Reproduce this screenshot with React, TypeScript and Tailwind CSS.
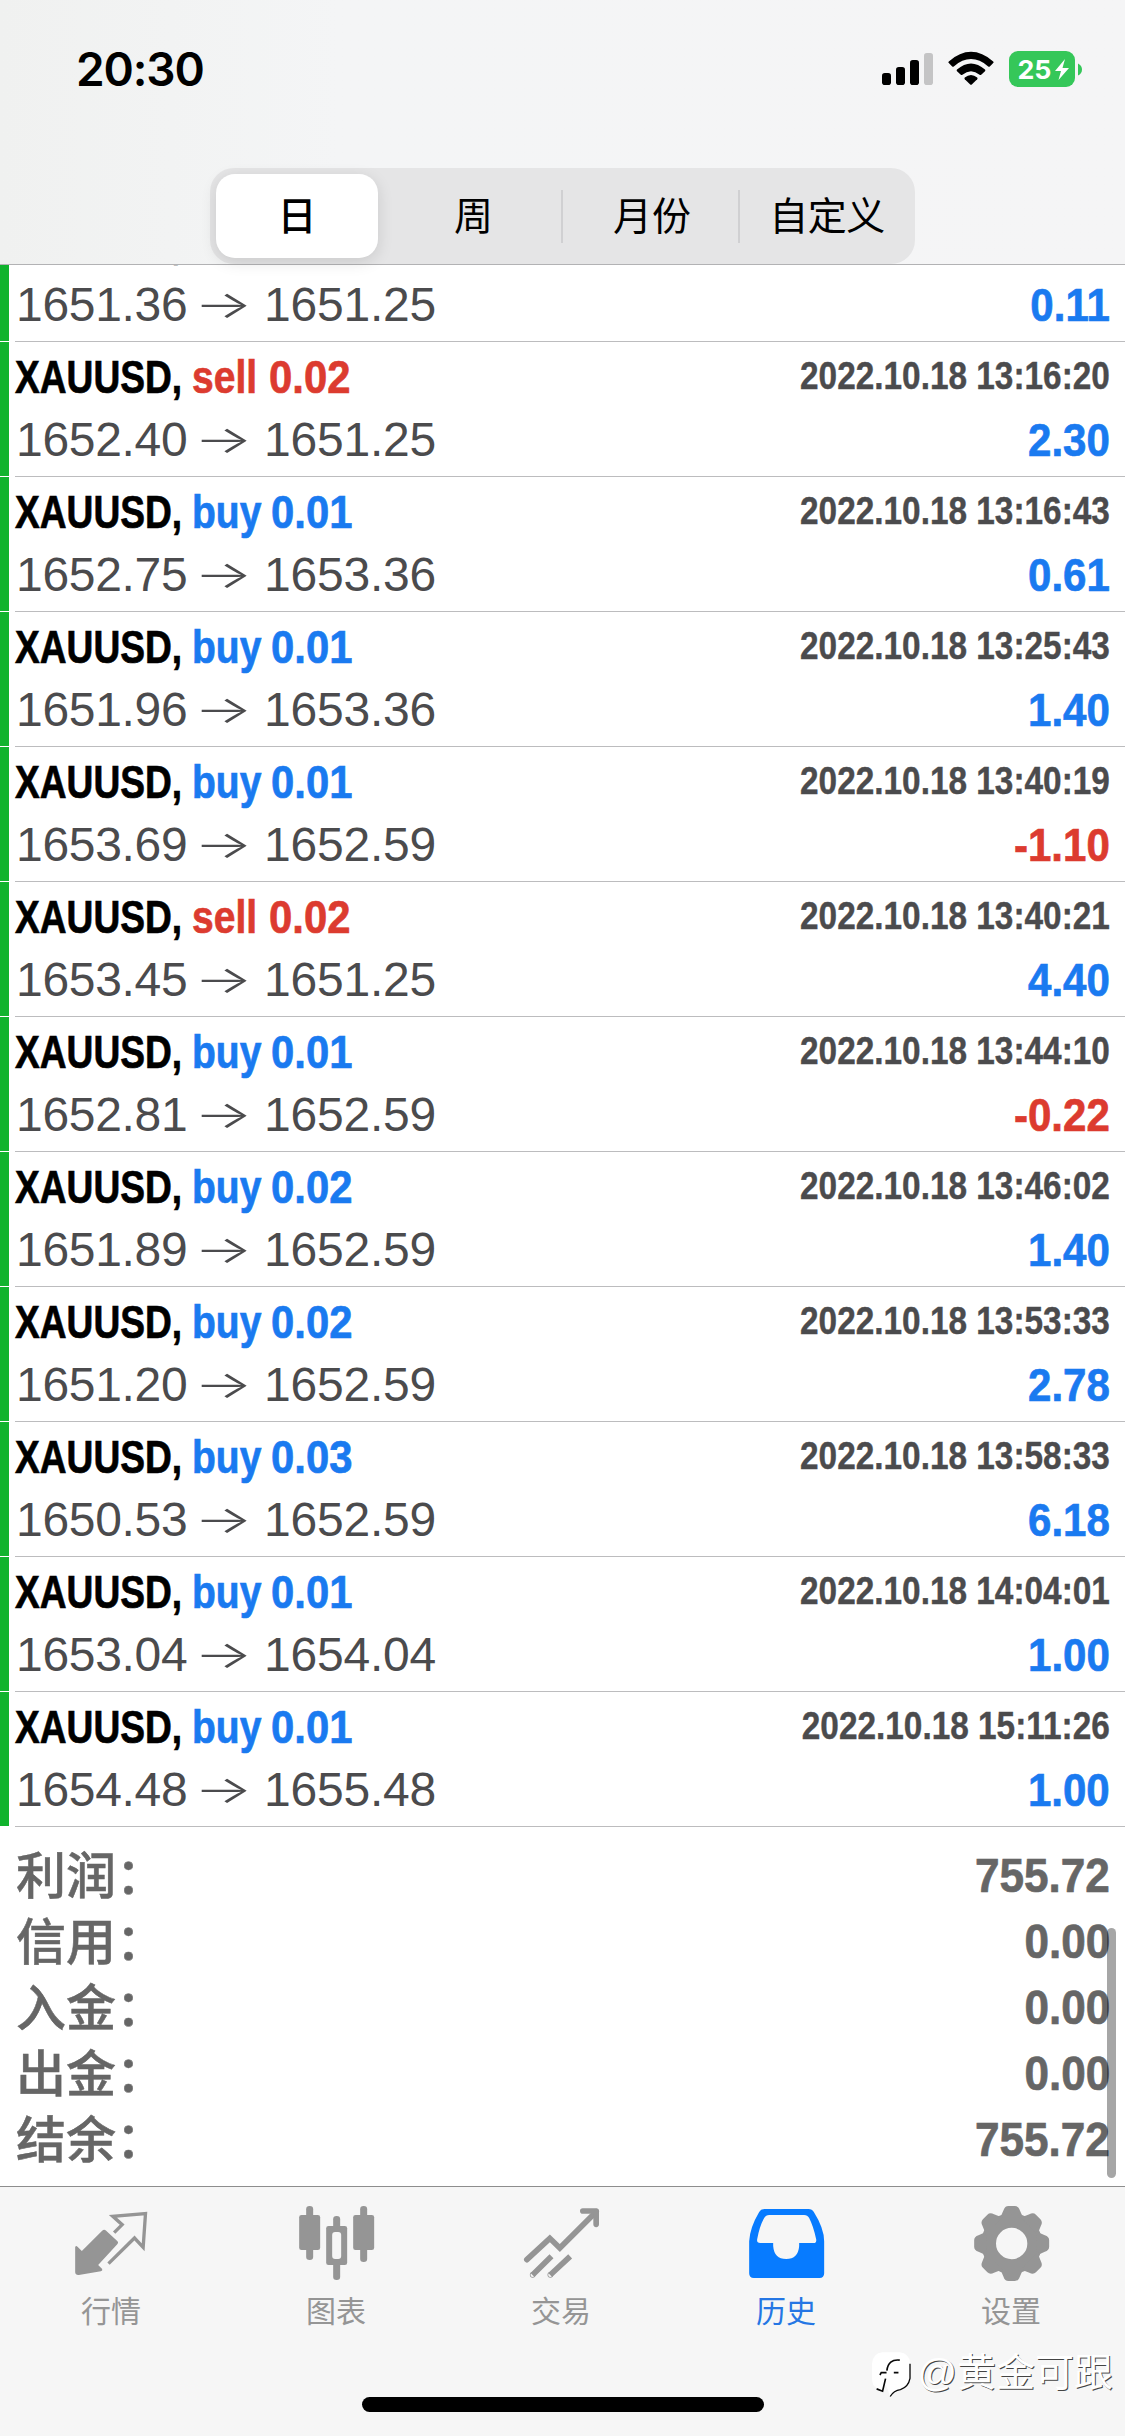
import React from "react";

type Deal = { side: "buy" | "sell"; volume: string; open: string; close: string; time: string; profit: string };

const deals: Deal[] = [
  { side: "sell", volume: "", open: "1651.36", close: "1651.25", time: "", profit: "0.11" },
  { side: "sell", volume: "0.02", open: "1652.40", close: "1651.25", time: "2022.10.18 13:16:20", profit: "2.30" },
  { side: "buy", volume: "0.01", open: "1652.75", close: "1653.36", time: "2022.10.18 13:16:43", profit: "0.61" },
  { side: "buy", volume: "0.01", open: "1651.96", close: "1653.36", time: "2022.10.18 13:25:43", profit: "1.40" },
  { side: "buy", volume: "0.01", open: "1653.69", close: "1652.59", time: "2022.10.18 13:40:19", profit: "-1.10" },
  { side: "sell", volume: "0.02", open: "1653.45", close: "1651.25", time: "2022.10.18 13:40:21", profit: "4.40" },
  { side: "buy", volume: "0.01", open: "1652.81", close: "1652.59", time: "2022.10.18 13:44:10", profit: "-0.22" },
  { side: "buy", volume: "0.02", open: "1651.89", close: "1652.59", time: "2022.10.18 13:46:02", profit: "1.40" },
  { side: "buy", volume: "0.02", open: "1651.20", close: "1652.59", time: "2022.10.18 13:53:33", profit: "2.78" },
  { side: "buy", volume: "0.03", open: "1650.53", close: "1652.59", time: "2022.10.18 13:58:33", profit: "6.18" },
  { side: "buy", volume: "0.01", open: "1653.04", close: "1654.04", time: "2022.10.18 14:04:01", profit: "1.00" },
  { side: "buy", volume: "0.01", open: "1654.48", close: "1655.48", time: "2022.10.18 15:11:26", profit: "1.00" },
];

const totals = [
  ["利润：", "755.72"],
  ["信用：", "0.00"],
  ["入金：", "0.00"],
  ["出金：", "0.00"],
  ["结余：", "755.72"],
];

function StatusBar() {
  return (
    <div className="flex h-[138px] items-center justify-between pl-[76px] pr-[43px]">
      <div className="font-['Inter',sans-serif] text-[46px] leading-none font-semibold tracking-[-1.1px] text-black">20:30</div>
      <svg width="202" height="40" viewBox="880 49 202 40">
        <rect x="882" y="73" width="9" height="12" rx="2.8" />
        <rect x="896" y="67" width="9" height="18" rx="2.8" />
        <rect x="910" y="60" width="9" height="25" rx="2.8" />
        <rect x="924" y="53" width="9" height="32" rx="2.8" fill="#c4c4c5" />
        <path d="M948.8 61.4 Q971 42.2 993.2 61.4 Q994 62.2 993.2 63 L989.8 66.4 Q989 67 988.2 66.4 Q971 51.8 953.8 66.4 Q953 67 952.2 66.4 L948.8 63 Q948 62.2 948.8 61.4Z" />
        <path d="M957 69.6 Q971 57.4 985 69.6 Q985.8 70.4 985 71.2 L981.2 74.8 Q980.4 75.4 979.6 74.8 Q971 67.6 962.4 74.8 Q961.6 75.4 960.8 74.8 L957 71.2 Q956.2 70.4 957 69.6Z" />
        <path d="M964.8 77.6 Q971 72.2 977.2 77.6 Q978 78.4 977.2 79.2 L971.8 84.5 Q971 85.2 970.2 84.5 L964.8 79.2 Q964 78.4 964.8 77.6Z" />
        <rect x="1009" y="51" width="66" height="36" rx="9" fill="#35c759" />
        <path d="M1078 63.5 Q1082 65.5 1082 69.5 Q1082 73.5 1078 75.5Z" fill="#35c759" />
        <text x="1017.5" y="79" fontFamily="Inter, sans-serif" fontSize="26" fontWeight="700" fill="#fff" textLength="34" lengthAdjust="spacingAndGlyphs">25</text>
        <path d="M1065 59 L1055 71 H1061 L1058.5 80 L1069 68 H1062.5Z" fill="#fff" />
      </svg>
    </div>
  );
}

function Segments() {
  return (
    <div className="mx-auto mt-[30px] flex h-[96px] w-[705px] rounded-[24px] bg-[#e5e5e6] p-[6px] text-[39px] leading-none text-black">
      <div className="flex w-[162px] items-center justify-center rounded-[19px] bg-white font-medium shadow-[0_4px_16px_rgba(0,0,0,0.12)]">日</div>
      <div className="flex w-[183px] items-center justify-center pl-[8px]">周</div>
      <div className="h-[53px] w-[2px] self-center bg-[#d0d0d2]" />
      <div className="flex w-[175px] items-center justify-center pl-[3px]">月份</div>
      <div className="h-[53px] w-[2px] self-center bg-[#d0d0d2]" />
      <div className="flex flex-1 items-center justify-center pl-[5px] tracking-[-0.5px]">自定义</div>
    </div>
  );
}

function DealRow({ deal }: { deal: Deal }) {
  const sideColor = deal.side === "buy" ? "text-[#1a7af0]" : "text-[#dc3b2f]";
  const profitColor = deal.profit.startsWith("-") ? "text-[#dc3b2f]" : "text-[#1a7af0]";
  return (
    <div className="flex h-[135px] shrink-0">
      <div className="mr-[6px] h-[134px] w-[9px] bg-[#10b32d]" />
      <div className="flex min-w-0 flex-1 justify-between border-b border-[#bcbcbe] pt-[3px] pr-[15px] whitespace-nowrap">
        <div>
          <div className="flex h-[64px] text-[47px] leading-[63px] font-bold [-webkit-text-stroke:0.7px_currentColor]">
            <span className="w-[177px] origin-left scale-x-[0.79] text-black">XAUUSD,</span>
            {deal.volume && (
              <span className={"flex " + sideColor}>
                <span className={deal.side === "buy" ? "w-[79px] origin-left scale-x-[0.83]" : "w-[77px] origin-left scale-x-[0.83]"}>{deal.side}</span>
                <span className="origin-left scale-x-[0.89]">{deal.volume}</span>
              </span>
            )}
          </div>
          <div className="flex h-[61px] text-[48px] leading-[61px] text-[#4b4b4d]">
            <span className="w-[179px] pl-px tracking-[-0.3px]">{deal.open}</span>
            <span className="w-[70px] origin-left scale-x-[1.62] font-['Inter',sans-serif] text-[38px] leading-[60px] font-light">→</span>
            <span className="tracking-[-0.2px]">{deal.close}</span>
          </div>
        </div>
        <div className="text-right font-bold">
          <div className="h-[64px] origin-right scale-x-[0.878] text-[38px] leading-[62px] text-[#4b4b4d] [-webkit-text-stroke:0.4px_currentColor]">{deal.time}</div>
          <div className={"h-[61px] origin-right scale-x-[0.895] text-[47px] leading-[61px] [-webkit-text-stroke:0.7px_currentColor] " + profitColor}>{deal.profit}</div>
        </div>
      </div>
    </div>
  );
}

function Totals() {
  return (
    <div className="relative h-[359px] bg-white pt-[15px] pr-[15px] pl-[15px] text-[#666666]">
      {totals.map(([label, value]) => (
        <div key={label} className="flex h-[66px] items-center justify-between">
          <span className="pt-[4px] pl-px text-[50px] leading-[62px] font-medium [-webkit-text-stroke:0.5px_currentColor]">{label}</span>
          <span className="origin-right scale-x-[0.9] text-[49px] leading-[66px] font-bold [-webkit-text-stroke:0.7px_currentColor]">{value}</span>
        </div>
      ))}
      <div className="absolute top-[101px] right-[9px] h-[250px] w-[9px] rounded-full bg-black/35" />
    </div>
  );
}

const icons = {
  quotes: (
    <svg width="83.33" height="80" viewBox="212.5 69 250 240" fill="#959595">
      <path d="M306 152 Q312 147 318 152 L352 184 Q356 188 352 192 L294 255 L306 267 Q308 272 302 274 L236 285 Q226 286 225 277 V202 Q227 195 232 200 L245 213Z" />
      <path d="M342 158 L366 134 L338 109 L436 101 L429 202 L403 174 L325 251" fill="none" stroke="#959595" strokeWidth="10" />
    </svg>
  ),
  chart: (
    <svg width="83.33" height="80" viewBox="887.5 69 250 240" fill="#959595">
      <rect x="918" y="78" width="21" height="162" rx="10" />
      <rect x="897" y="105" width="63" height="105" rx="7" />
      <rect x="999" y="108" width="21" height="192" rx="10" />
      <rect x="978" y="138" width="63" height="117" rx="7" />
      <rect x="996" y="156" width="27" height="81" rx="9" fill="#f6f6f6" />
      <rect x="1080" y="78" width="21" height="168" rx="10" />
      <rect x="1059" y="105" width="63" height="105" rx="7" />
    </svg>
  ),
  trade: (
    <svg width="83.33" height="80" viewBox="212.5 69 250 240" fill="none" stroke="#959595" strokeWidth="17">
      <path d="M230 239 L299 175 L329 204 L438 95" strokeLinejoin="miter" strokeLinecap="round" />
      <path d="M398 93 H438 V133" strokeLinecap="round" strokeLinejoin="round" />
      <path d="M247 285 L304 229 M300 285 L360 229" />
      <circle cx="247.5" cy="284.5" r="1" strokeWidth="15" />
      <circle cx="300.5" cy="284.5" r="1" strokeWidth="15" />
    </svg>
  ),
  history: (
    <svg width="83.33" height="80" viewBox="887.5 69 250 240" fill="#077bff">
      <path fillRule="evenodd" d="M943 87 H1075 Q1086 87 1091 96 Q1122 145 1122 184 V280 Q1122 294 1108 294 H911 Q897 294 897 280 V184 Q899 143 927 96 Q932 87 943 87Z M957 105 Q947 105 942 114 Q928 139 921 178 Q919 189 930 189 H969 V198 Q972 237 1008 237 Q1044 237 1047 198 V189 H1090 Q1100 189 1098 178 Q1090 139 1077 114 Q1072 105 1062 105Z" />
    </svg>
  ),
  settings: (
    <svg width="83.33" height="80" viewBox="437.5 69 250 240" fill="#959595">
      <circle cx="559.5" cy="190.5" r="69" fill="none" stroke="#959595" strokeWidth="44" />
      {[0, 45, 90, 135, 180, 225, 270, 315].map((angle) => (
        <path key={angle} transform={`rotate(${angle} 559.5 190.5)`} d="M522 116 Q530 105 535 91 Q539 78 550 78 H569 Q580 78 584 91 Q589 105 597 116Z" />
      ))}
    </svg>
  ),
};

const tabs = [
  { label: "行情", icon: icons.quotes, active: false },
  { label: "图表", icon: icons.chart, active: false },
  { label: "交易", icon: icons.trade, active: false },
  { label: "历史", icon: icons.history, active: true },
  { label: "设置", icon: icons.settings, active: false },
];

function TabBar() {
  return (
    <div className="relative h-[250px] border-t border-[#8d8d8d] bg-[#f6f6f6]">
      <div className="grid grid-cols-5 pt-[16px]">
        {tabs.map((tab) => (
          <div key={tab.label} className="flex flex-col items-center">
            {tab.icon}
            <span className={"mt-[7px] mr-[3px] text-[30px] leading-[44px] " + (tab.active ? "text-[#2576e4]" : "text-[#959595]")}>{tab.label}</span>
          </div>
        ))}
      </div>
      <div className="mx-auto mt-[63px] h-[15px] w-[402px] rounded-full bg-black" />
      <div className="absolute top-[161px] right-[12px] flex items-center text-[39px] leading-[50px] whitespace-nowrap text-white [text-shadow:1px_1px_0.5px_#444]">
        <svg className="mt-[3px] mr-[6px] overflow-visible" width="39" height="45" viewBox="46 55 118 135">
          <path d="M78 55 H130 Q158 57 162 88 V130 Q158 160 134 170 L114 176 L100 190 L94 168 L84 148 L80 174 L58 162 Q46 156 46 132 V90 Q48 57 78 55Z" fill="#fff" />
          <path d="M161 90 V134 Q156 160 132 168 Q112 170 101 189" fill="none" stroke="#080808" strokeWidth="4" />
          <path d="M130 79 Q95 75 91 111 M70 124 L74 117 H90 M112 117 H126 M60 166 L78 173 L87 135" fill="none" stroke="#080808" strokeWidth="5" />
        </svg>
        <span>@黄金可跟</span>
      </div>
    </div>
  );
}

export default function App() {
  return (
    <div className="flex h-[2436px] w-[1125px] flex-col overflow-hidden bg-white font-['Liberation_Sans','Noto_Sans_CJK_SC',sans-serif]">
      <div className="h-[265px] shrink-0 border-b border-[#b2b2b4] bg-linear-to-r from-[#f0f1f0] via-[#f4f5f6] via-30% to-[#f5f5f6]">
        <StatusBar />
        <Segments />
      </div>
      <div className="flex h-[1562px] shrink-0 flex-col justify-end overflow-hidden">
        {deals.map((deal, index) => (
          <DealRow key={index} deal={deal} />
        ))}
      </div>
      <Totals />
      <TabBar />
    </div>
  );
}
